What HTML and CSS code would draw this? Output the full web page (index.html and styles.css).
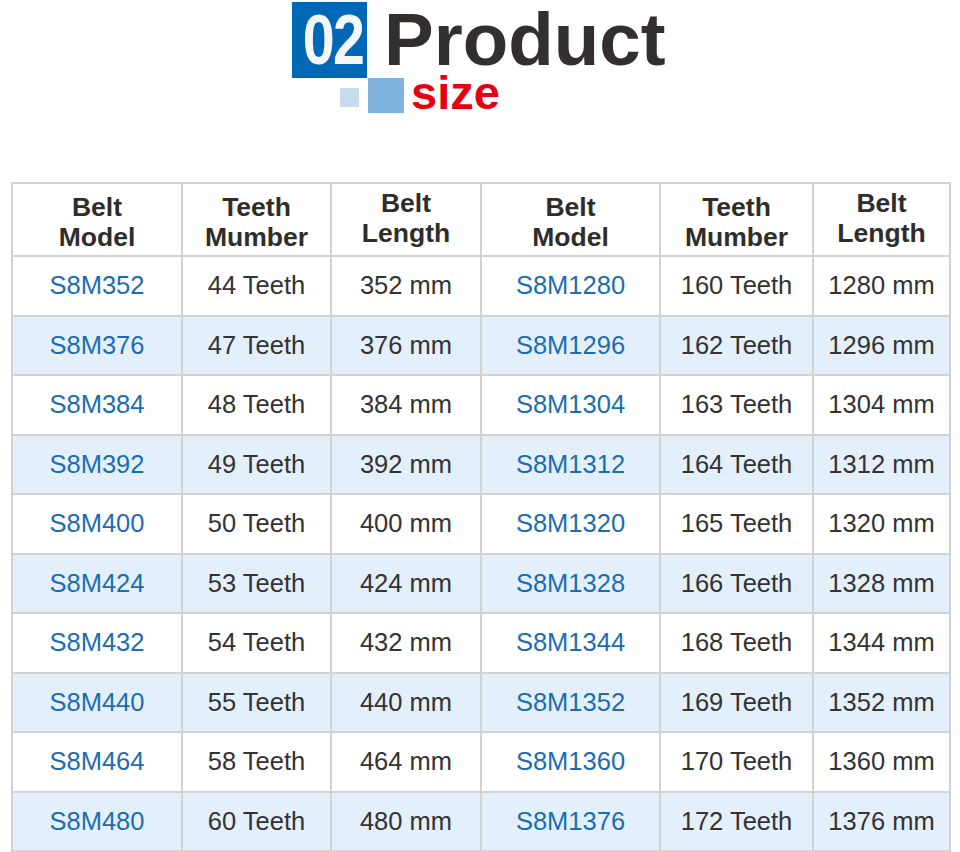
FILE: index.html
```html
<!DOCTYPE html>
<html>
<head>
<meta charset="utf-8">
<link rel="stylesheet" href="styles.css">
</head>
<body>
<div class="title">
  <div class="title-row1">
    <div class="num-box"><span class="num">02</span></div>
    <div class="product">Product</div>
  </div>
  <div class="title-row2">
    <div class="sq-small"></div>
    <div class="sq-big"></div>
    <div class="size">size</div>
  </div>
</div>
<table class="spec">
  <colgroup>
    <col class="c1"><col class="c2"><col class="c3"><col class="c4"><col class="c5"><col class="c6">
  </colgroup>
  <thead>
    <tr>
      <th>Belt<br>Model</th><th>Teeth<br>Mumber</th><th class="len">Belt<br>Length</th>
      <th>Belt<br>Model</th><th>Teeth<br>Mumber</th><th class="len">Belt<br>Length</th>
    </tr>
  </thead>
  <tbody>
    <tr><td class="m">S8M352</td><td>44 Teeth</td><td>352 mm</td><td class="m">S8M1280</td><td>160 Teeth</td><td>1280 mm</td></tr>
    <tr><td class="m">S8M376</td><td>47 Teeth</td><td>376 mm</td><td class="m">S8M1296</td><td>162 Teeth</td><td>1296 mm</td></tr>
    <tr><td class="m">S8M384</td><td>48 Teeth</td><td>384 mm</td><td class="m">S8M1304</td><td>163 Teeth</td><td>1304 mm</td></tr>
    <tr><td class="m">S8M392</td><td>49 Teeth</td><td>392 mm</td><td class="m">S8M1312</td><td>164 Teeth</td><td>1312 mm</td></tr>
    <tr><td class="m">S8M400</td><td>50 Teeth</td><td>400 mm</td><td class="m">S8M1320</td><td>165 Teeth</td><td>1320 mm</td></tr>
    <tr><td class="m">S8M424</td><td>53 Teeth</td><td>424 mm</td><td class="m">S8M1328</td><td>166 Teeth</td><td>1328 mm</td></tr>
    <tr><td class="m">S8M432</td><td>54 Teeth</td><td>432 mm</td><td class="m">S8M1344</td><td>168 Teeth</td><td>1344 mm</td></tr>
    <tr><td class="m">S8M440</td><td>55 Teeth</td><td>440 mm</td><td class="m">S8M1352</td><td>169 Teeth</td><td>1352 mm</td></tr>
    <tr><td class="m">S8M464</td><td>58 Teeth</td><td>464 mm</td><td class="m">S8M1360</td><td>170 Teeth</td><td>1360 mm</td></tr>
    <tr><td class="m">S8M480</td><td>60 Teeth</td><td>480 mm</td><td class="m">S8M1376</td><td>172 Teeth</td><td>1376 mm</td></tr>
  </tbody>
</table>
</body>
</html>
```
FILE: styles.css
```css
html, body {
  margin: 0;
  padding: 0;
  background: #ffffff;
  font-family: "Liberation Sans", Arial, sans-serif;
}
.title {
  height: 182px;
  padding-top: 2px;
  box-sizing: border-box;
}
.title-row1 {
  display: flex;
  margin-left: 292px;
  height: 76px;
}
.num-box {
  width: 75px;
  height: 76px;
  background: #0068b7;
  display: flex;
  align-items: center;
  justify-content: center;
  padding-left: 6px;
  box-sizing: border-box;
}
.num {
  display: inline-block;
  color: #f4f6f9;
  font-weight: bold;
  font-size: 70px;
  line-height: 76px;
  letter-spacing: -2px;
  transform: scaleX(0.82);
}
.product {
  margin-left: 17px;
  color: #332f2e;
  font-weight: bold;
  font-size: 74.5px;
  line-height: 76px;
}
.title-row2 {
  display: flex;
  margin-left: 340px;
}
.sq-small {
  width: 19px;
  height: 19px;
  margin-top: 10px;
  background: #c6dcef;
}
.sq-big {
  width: 36px;
  height: 35px;
  margin-left: 9px;
  background: #7fb2dd;
}
.size {
  margin-left: 7px;
  color: #e60012;
  font-weight: bold;
  font-size: 47px;
  line-height: 30px;
}
.spec {
  margin-left: 11px;
  width: 938px;
  border-collapse: collapse;
  table-layout: fixed;
}
.c1 { width: 170px; }
.c2 { width: 149px; }
.c3 { width: 150px; }
.c4 { width: 179px; }
.c5 { width: 153px; }
.c6 { width: 137px; }
.spec th, .spec td {
  border: 2px solid #d2d2d2;
  text-align: center;
  padding: 0;
  box-sizing: border-box;
}
.spec th {
  height: 73px;
  color: #2f2d2c;
  font-weight: bold;
  font-size: 26.5px;
  line-height: 30px;
  vertical-align: middle;
  padding-top: 4px;
}
.spec th.len {
  padding-top: 0;
  padding-bottom: 4px;
}
.spec td {
  height: 59.5px;
  color: #333333;
  font-size: 25.5px;
}
.spec td.m {
  color: #1b6db3;
}
.spec tbody tr:nth-child(even) td {
  background: #e3f0fb;
}
```
